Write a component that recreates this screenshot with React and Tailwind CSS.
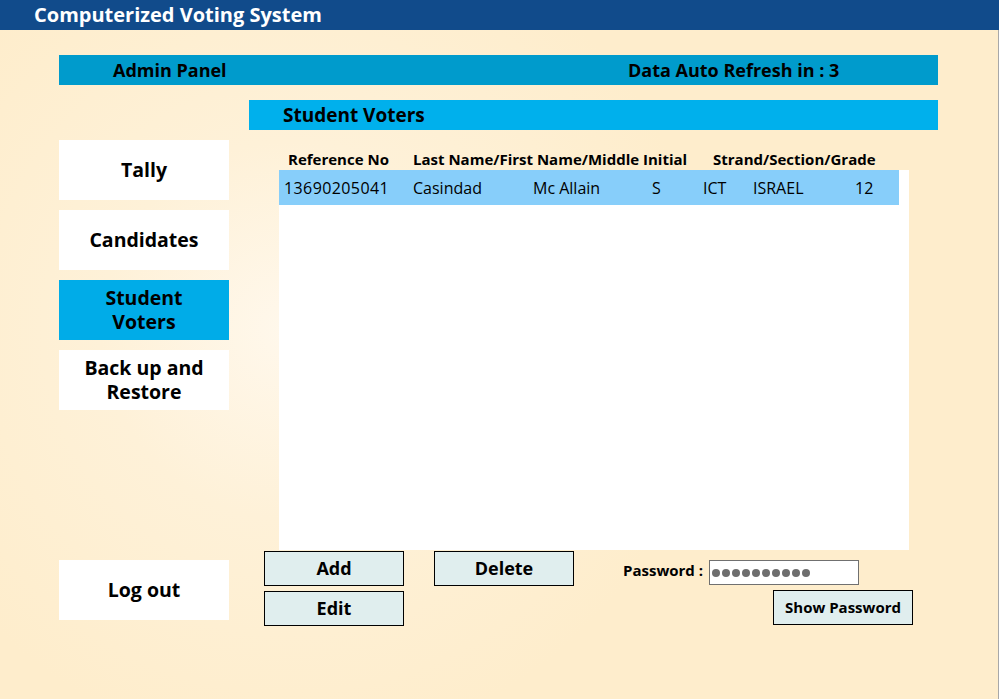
import React from "react";

const font = { fontFamily: '"Open Sans", "Noto Sans", sans-serif' };

function SideBtn({ lines, active }) {
  return (
    <div
      className={`h-[60px] w-[170px] flex flex-col items-center justify-center text-center text-[19.5px] font-bold text-black ${
        active ? "bg-[#00ACE8]" : "bg-white"
      }`}
    >
      {lines.map((l) => (
        <div key={l} className="h-[24px] leading-[24px]">
          {l}
        </div>
      ))}
    </div>
  );
}

function Btn({ children, className = "" }) {
  return (
    <div
      className={`h-[35px] flex items-center justify-center border border-black bg-[#E0EEEE] font-bold text-black ${className}`}
    >
      {children}
    </div>
  );
}

export default function App() {
  const dots = Array.from({ length: 10 });
  return (
    <div
      className="w-[999px] h-[699px] overflow-hidden flex flex-col bg-[radial-gradient(ellipse_420px_420px_at_290px_330px,#FFF8EC_0%,#FEF1D8_45%,#FEEDCC_100%)]"
      style={font}
    >
      <div className="h-[30px] shrink-0 bg-[#114B8B] pl-[34px] flex items-center text-white text-[20px] font-bold">
        Computerized Voting System
      </div>
      <div className="flex-1 flex flex-col border-r border-[#A8A8A8]">
        <div className="mt-[25px] ml-[59px] w-[879px] h-[30px] bg-[#009BCC] flex items-center text-[18px] font-bold text-black">
          <span className="ml-[54px] w-[515px]">Admin Panel</span>
          <span>Data Auto Refresh in : 3</span>
        </div>
        <div className="mt-[15px] ml-[249px] w-[689px] h-[30px] bg-[#00B0EC] flex items-center pl-[34px] text-[19px] font-bold text-black">
          Student Voters
        </div>
        <div className="flex ml-[59px]">
          <div className="flex flex-col mt-[10px]">
            <div className="flex flex-col gap-[10px]">
              <SideBtn lines={["Tally"]} />
              <SideBtn lines={["Candidates"]} />
              <SideBtn active lines={["Student", "Voters"]} />
              <SideBtn lines={["Back up and", "Restore"]} />
            </div>
            <div className="mt-[150px]">
              <SideBtn lines={["Log out"]} />
            </div>
          </div>
          <div className="flex flex-col ml-[35px]">
            <div className="ml-[15px] h-[40px] flex items-end text-[15px] font-bold text-black">
              <span className="ml-[9px] w-[125px]">Reference No</span>
              <span className="w-[300px]">Last Name/First Name/Middle Initial</span>
              <span>Strand/Section/Grade</span>
            </div>
            <div className="ml-[15px] w-[630px] h-[380px] bg-white">
              <div className="w-[620px] h-[35px] bg-[#87CEFA] flex items-center text-[16px] text-black">
                <span className="ml-[5px] w-[129px] tracking-[0.4px]">13690205041</span>
                <span className="w-[120px]">Casindad</span>
                <span className="w-[119px]">Mc Allain</span>
                <span className="w-[51px]">S</span>
                <span className="w-[50px]">ICT</span>
                <span className="w-[102px]">ISRAEL</span>
                <span>12</span>
              </div>
            </div>
            <div className="flex">
              <div className="flex flex-col gap-[5px] mt-[1px]">
                <Btn className="w-[140px] text-[18px]">Add</Btn>
                <Btn className="w-[140px] text-[18px]">Edit</Btn>
              </div>
              <div className="ml-[30px] mt-[1px]">
                <Btn className="w-[140px] text-[18px]">Delete</Btn>
              </div>
              <div className="ml-[49px] flex flex-col items-end">
                <div className="flex items-start h-[25px] mt-[10px]">
                  <span className="text-[15px] leading-[20px] font-bold text-black mr-[6px]">Password :</span>
                  <div className="w-[150px] h-[25px] border border-[#707070] bg-white flex items-center pl-[2px] gap-[2px]">
                    {dots.map((_, i) => (
                      <span key={i} className="w-[8px] h-[8px] rounded-full bg-[#6E6E6E]" />
                    ))}
                  </div>
                </div>
                <Btn className="w-[140px] mt-[5px] mr-[-54px] text-[15px]">Show Password</Btn>
              </div>
            </div>
          </div>
        </div>
      </div>
    </div>
  );
}
